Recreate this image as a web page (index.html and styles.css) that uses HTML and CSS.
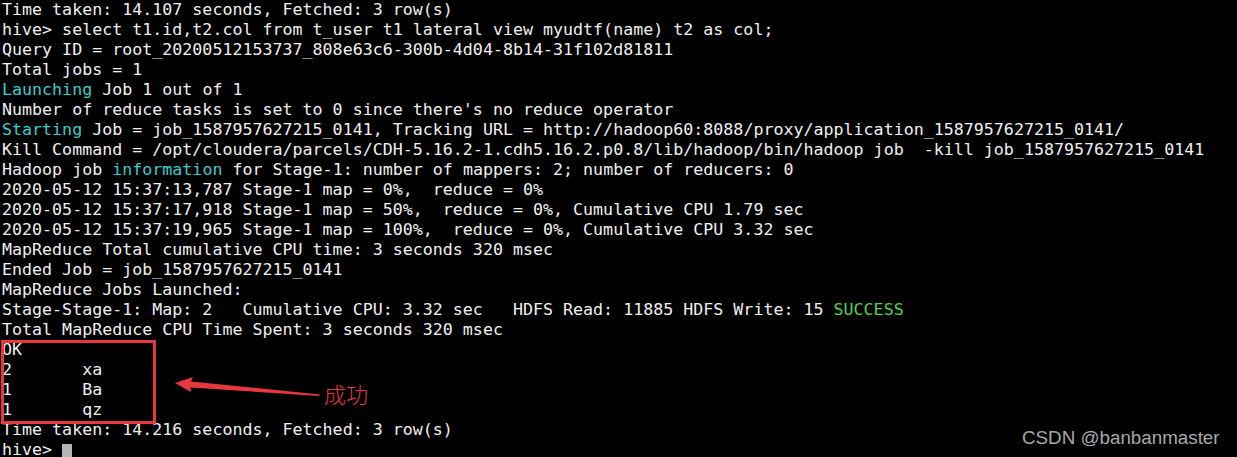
FILE: index.html
```html
<!DOCTYPE html>
<html lang="zh">
<head>
<meta charset="utf-8">
<title>hive terminal</title>
<link rel="stylesheet" href="styles.css">
</head>
<body>
<div class="term">
<pre class="out">Time taken: 14.107 seconds, Fetched: 3 row(s)
hive&gt; select t1.id,t2.col from t_user t1 lateral view myudtf(name) t2 as col;
Query ID = root_20200512153737_808e63c6-300b-4d04-8b14-31f102d81811
Total jobs = 1
<span class="cy">Launching</span> Job 1 out of 1
Number of reduce tasks is set to 0 since there's no reduce operator
<span class="cy">Starting</span> Job = job_1587957627215_0141, Tracking URL = http://hadoop60:8088/proxy/application_1587957627215_0141/
Kill Command = /opt/cloudera/parcels/CDH-5.16.2-1.cdh5.16.2.p0.8/lib/hadoop/bin/hadoop job  -kill job_1587957627215_0141
Hadoop job <span class="cy">information</span> for Stage-1: number of mappers: 2; number of reducers: 0
2020-05-12 15:37:13,787 Stage-1 map = 0%,  reduce = 0%
2020-05-12 15:37:17,918 Stage-1 map = 50%,  reduce = 0%, Cumulative CPU 1.79 sec
2020-05-12 15:37:19,965 Stage-1 map = 100%,  reduce = 0%, Cumulative CPU 3.32 sec
MapReduce Total cumulative CPU time: 3 seconds 320 msec
Ended Job = job_1587957627215_0141
MapReduce Jobs Launched:
Stage-Stage-1: Map: 2   Cumulative CPU: 3.32 sec   HDFS Read: 11885 HDFS Write: 15 <span class="gr">SUCCESS</span>
Total MapReduce CPU Time Spent: 3 seconds 320 msec
OK
2       xa
1       Ba
1       qz
Time taken: 14.216 seconds, Fetched: 3 row(s)
hive&gt; <span class="cursor"> </span></pre>
<div class="mark-box"></div>
<svg class="arrow" width="160" height="30" viewBox="0 0 160 30">
  <polygon fill="#e8383d" points="3,10 21,4 19,8.5 148,21.5 147,23 18.5,14.5 19,19"/>
</svg>
<span class="label">成功</span>
<span class="watermark">CSDN @banbanmaster</span>
</div>
</body>
</html>
```
FILE: styles.css
```css
html, body {
  margin: 0;
  padding: 0;
  background: #000;
  overflow: hidden;
}
.term {
  position: relative;
  width: 1237px;
  height: 457px;
  background: #000;
}
.out {
  margin: 0;
  padding: 0 0 0 2px;
  font-family: "DejaVu Sans Mono", monospace;
  font-size: 16.65px;
  line-height: 20px;
  color: #efefef;
  tab-size: 8;
  white-space: pre;
}
.cy { color: #3ccccc; }
.gr { color: #4fd34f; }
.cursor {
  display: inline-block;
  width: 10px;
  height: 17px;
  background: #b4b4b8;
  vertical-align: -4px;
}
.mark-box {
  position: absolute;
  left: 1px;
  top: 340px;
  width: 149px;
  height: 78px;
  border: 3px solid #e8383d;
}
.arrow {
  position: absolute;
  left: 172px;
  top: 373px;
}
.label {
  position: absolute;
  left: 324px;
  top: 379px;
  font-family: "Noto Sans CJK SC", sans-serif;
  font-weight: 300;
  font-size: 22px;
  line-height: 28px;
  color: #e8383d;
}
.watermark {
  position: absolute;
  left: 1022px;
  top: 428px;
  font-family: "Liberation Sans", Arial, sans-serif;
  font-size: 18.8px;
  line-height: 20px;
  color: #a8a8a8;
}
```
